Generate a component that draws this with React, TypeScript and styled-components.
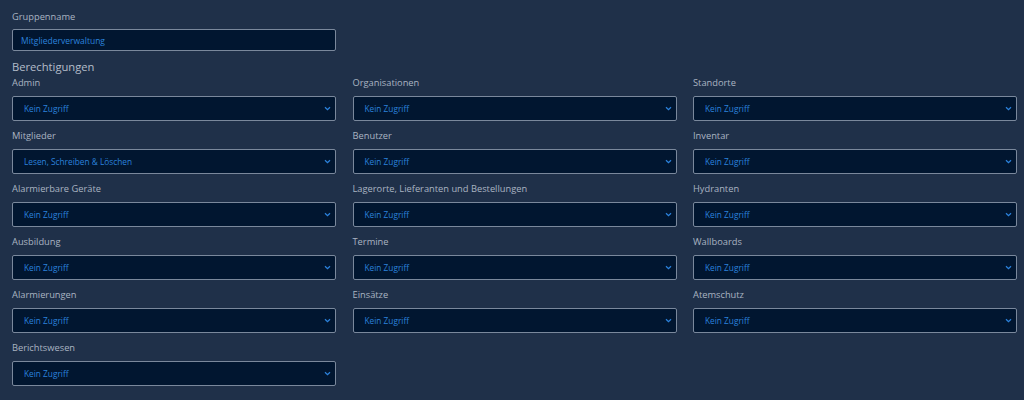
import * as React from 'react'
import styled, { createGlobalStyle } from 'styled-components'

const GlobalStyle = createGlobalStyle`
  html, body {
    margin: 0;
    padding: 0;
    background: #1f3049;
  }
  body {
    font-family: 'Open Sans', 'Liberation Sans', sans-serif;
  }
`

const permissions: { name: string; value: string }[] = [
  { name: 'Admin', value: 'Kein Zugriff' },
  { name: 'Organisationen', value: 'Kein Zugriff' },
  { name: 'Standorte', value: 'Kein Zugriff' },
  { name: 'Mitglieder', value: 'Lesen, Schreiben & Löschen' },
  { name: 'Benutzer', value: 'Kein Zugriff' },
  { name: 'Inventar', value: 'Kein Zugriff' },
  { name: 'Alarmierbare Geräte', value: 'Kein Zugriff' },
  { name: 'Lagerorte, Lieferanten und Bestellungen', value: 'Kein Zugriff' },
  { name: 'Hydranten', value: 'Kein Zugriff' },
  { name: 'Ausbildung', value: 'Kein Zugriff' },
  { name: 'Termine', value: 'Kein Zugriff' },
  { name: 'Wallboards', value: 'Kein Zugriff' },
  { name: 'Alarmierungen', value: 'Kein Zugriff' },
  { name: 'Einsätze', value: 'Kein Zugriff' },
  { name: 'Atemschutz', value: 'Kein Zugriff' },
  { name: 'Berichtswesen', value: 'Kein Zugriff' }
]

const Chevron = () => (
  <svg width="7" height="5" viewBox="0 0 7 5" fill="none">
    <path d="M1 1.2 L3.5 3.6 L6 1.2" stroke="#2b82dc" strokeWidth="1.3" />
  </svg>
)

const App: React.FC = () => (
  <Page>
    <GlobalStyle />
    <Label>Gruppenname</Label>
    <NameInput>Mitgliederverwaltung</NameInput>
    <SectionTitle>Berechtigungen</SectionTitle>
    <Grid>
      {permissions.map((p) => (
        <Field key={p.name}>
          <Label>{p.name}</Label>
          <Select>
            <span>{p.value}</span>
            <Chevron />
          </Select>
        </Field>
      ))}
    </Grid>
  </Page>
)

const Page = styled.div`
  padding: 9px 8px 20px 12px;
  width: 1004px;
  box-sizing: content-box;
`

const Label = styled.div`
  font-size: 9.3px;
  line-height: 16px;
  color: #aab4c2;
  white-space: nowrap;
`

const NameInput = styled.div`
  margin-top: 4px;
  width: 324px;
  height: 22px;
  box-sizing: border-box;
  border: 1px solid #7a889c;
  border-radius: 2px;
  background: #011630;
  color: #2b82dc;
  font-size: 8.5px;
  padding: 0 8px;
  display: flex;
  align-items: center;
`

const SectionTitle = styled.div`
  margin-top: 8px;
  font-size: 11.2px;
  line-height: 16px;
  color: #b4bdca;
`

const Grid = styled.div`
  display: grid;
  grid-template-columns: repeat(3, 324px);
  column-gap: 16.5px;
  row-gap: 7px;
`

const Field = styled.div`
  display: flex;
  flex-direction: column;
`

const Select = styled.div`
  margin-top: 5px;
  height: 25px;
  box-sizing: border-box;
  border: 1px solid #7a889c;
  border-radius: 2px;
  background: #011630;
  color: #2b82dc;
  font-size: 8.3px;
  padding: 0 4px 0 11px;
  display: flex;
  align-items: center;
  justify-content: space-between;
`

export default App
